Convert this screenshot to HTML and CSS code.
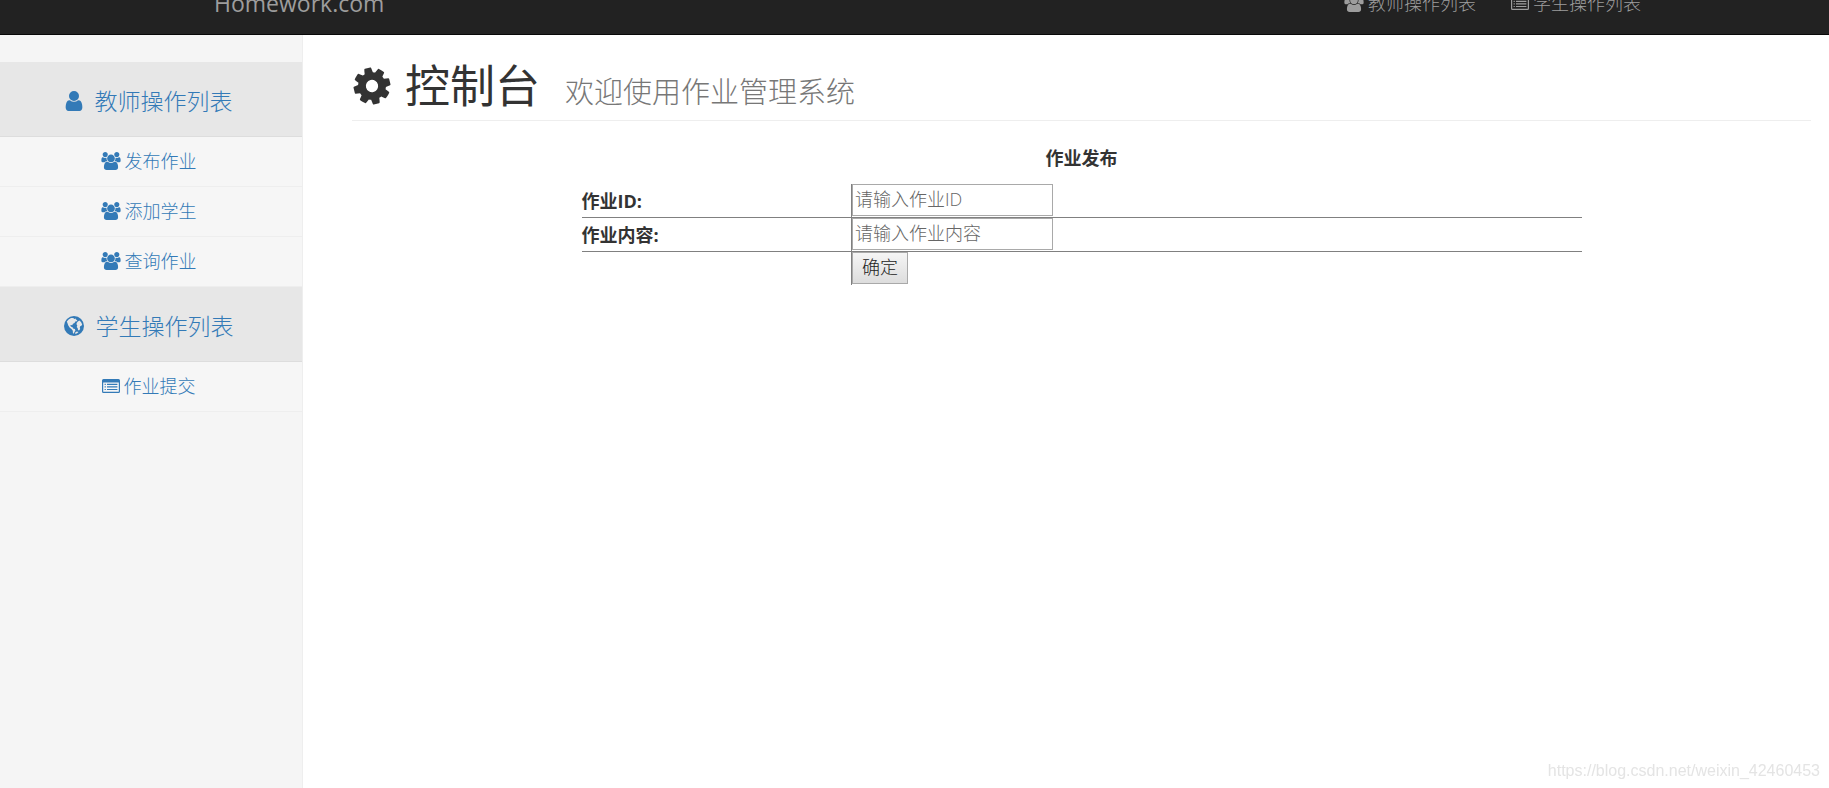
FILE: index.html
```html
<!DOCTYPE html>
<html lang="zh-CN">
<head>
<meta charset="utf-8">
<title>作业管理系统</title>
<link rel="stylesheet" href="styles.css">
</head>
<body>
<svg class="sprite" aria-hidden="true">
  <symbol id="users" viewBox="-64 0 1920 1792"><path d="M529 896q-162 5-265 128h-134q-82 0-138-40.500t-56-118.500q0-353 124-353 6 0 43.500 21t97.500 42.500 119 21.500q67 0 133-23-5 37-5 66 0 139 81 256zm1071 637q0 120-73 189.500t-194 69.500h-874q-121 0-194-69.500t-73-189.500q0-53 3.500-103.500t14-109 26.500-108.500 43-97.500 62-81 85.500-53.500 111.500-20q10 0 43 21.500t73 48 107 48 135 21.500 135-21.500 107-48 73-48 43-21.500q61 0 111.500 20t85.500 53.500 62 81 43 97.500 26.500 108.500 14 109 3.500 103.500zm-1024-1277q0 106-75 181t-181 75-181-75-75-181 75-181 181-75 181 75 75 181zm704 384q0 159-112.500 271.500t-271.500 112.500-271.500-112.500-112.500-271.500 112.500-271.500 271.500-112.500 271.500 112.500 112.500 271.500zm576 225q0 78-56 118.500t-138 40.500h-134q-103-123-265-128 81-117 81-256 0-29-5-66 66 23 133 23 59 0 119-21.500t97.500-42.500 43.500-21q124 0 124 353zm-128-609q0 106-75 181t-181 75-181-75-75-181 75-181 181-75 181 75 75 181z"/></symbol>
  <symbol id="user" viewBox="256 128 1280 1536"><path d="M1536 1399q0 109-62.500 187t-150.500 78h-854q-88 0-150.500-78t-62.500-187q0-85 8.500-160.500t31.500-152 58.500-131 94-89 134.500-34.500q131 128 313 128t313-128q76 0 134.500 34.500t94 89 58.500 131 31.500 152 8.500 160.500zm-256-887q0 159-112.500 271.500t-271.500 112.500-271.500-112.500-112.500-271.500 112.500-271.500 271.500-112.500 271.500 112.500 112.500 271.500z"/></symbol>
  <symbol id="list" viewBox="0 0 18 14"><path fill-rule="evenodd" d="M1.500 0h15Q18 0 18 1.500v11Q18 14 16.500 14h-15Q0 14 0 12.500v-11Q0 0 1.500 0zM1.200 3.400v9q0 .4.400.4h14.800q.4 0 .4-.4v-9zM2.600 4.700h1.200v1.200H2.600zM5 4.700h10.400v1.200H5zM2.600 7.300h1.200v1.200H2.600zM5 7.300h10.400v1.200H5zM2.600 9.900h1.200v1.200H2.600zM5 9.900h10.400v1.200H5z"/></symbol>
  <symbol id="globe" viewBox="0 0 20 20"><circle cx="10" cy="10" r="10"/><path class="land" d="M2.800 5.600 4.600 3.400 7 1.900l2.200.1 1.200 1 1.300-.6.300 1.200 1.300.6-.5 1.100-1.500.3-.8 1.300-1.500.8-.8 1.500-1.300-.3-.7.900 1 .9 1.400.6.500 1.200 1.800.6.500 1.400-1 1.600-.500 1.600-1-.8-.1-2.200-1.300-1.700-1.700-1.300-1.500-2.200-.8-2.300zM13.800 5.400l1.600-.8 1.600 1.500 1.200 2.300-.8 1.400-1.200.4-.4 1.300.4 1.400-1.200 1.500-1-.4-.3-1.700-1-1.400.6-1.500-.9-1.300.6-1.500zM11.200 16.400l1.600-.8 1.700.3-1.300 1.400-1.900.7z"/></symbol>
  <symbol id="cog" viewBox="60 60 1672 1672"><path transform="rotate(-14 896 896)" d="M1152 896q0-106-75-181t-181-75-181 75-75 181 75 181 181 75 181-75 75-181zm512-109v222q0 12-8 23t-20 13l-185 28q-19 54-39 91 35 50 107 138 10 12 10 25t-9 23q-27 37-99 108t-94 71q-12 0-26-9l-138-108q-44 23-91 38-16 136-29 186-7 28-36 28h-222q-14 0-24.500-8.500t-11.500-21.500l-28-184q-49-16-90-37l-141 107q-10 9-25 9-14 0-25-11-126-114-165-168-7-10-7-23 0-12 8-23 15-21 51-66.500t54-70.500q-27-50-41-99l-183-27q-13-2-21-12.500t-8-23.500v-222q0-12 8-23t19-13l186-28q14-46 39-92-40-57-107-138-10-12-10-24 0-10 9-23 26-36 98.500-107.500t94.500-71.500q13 0 26 10l138 107q44-23 91-38 16-136 29-186 7-28 36-28h222q14 0 24.500 8.500t11.500 21.500l28 184q49 16 90 37l142-107q9-9 24-9 13 0 25 10 129 119 165 170 7 8 7 22 0 12-8 23-15 21-51 66.500t-54 70.500q26 50 41 98l183 28q13 2 21 12.500t8 23.500z"/></symbol>
</svg>

<header class="navbar">
  <a class="brand" href="#">Homework.com</a>
  <nav class="top-nav">
    <a href="#"><svg class="icon-users"><use href="#users"/></svg>教师操作列表</a>
    <a href="#"><svg class="icon-list"><use href="#list"/></svg>学生操作列表</a>
  </nav>
</header>

<div class="layout">
  <nav class="sidebar">
    <a class="group" href="#"><svg class="icon-user"><use href="#user"/></svg>教师操作列表</a>
    <a class="item" href="#"><svg class="icon-users"><use href="#users"/></svg>发布作业</a>
    <a class="item" href="#"><svg class="icon-users"><use href="#users"/></svg>添加学生</a>
    <a class="item" href="#"><svg class="icon-users"><use href="#users"/></svg>查询作业</a>
    <a class="group" href="#"><svg class="icon-globe"><use href="#globe"/></svg>学生操作列表</a>
    <a class="item" href="#"><svg class="icon-list"><use href="#list"/></svg>作业提交</a>
  </nav>

  <main class="content">
    <h1 class="page-header">
      <svg class="icon-cog"><use href="#cog"/></svg>
      <span>控制台</span>
      <small>欢迎使用作业管理系统</small>
    </h1>
    <form>
      <table class="form-table">
        <caption>作业发布</caption>
        <tbody>
          <tr>
            <th scope="row"><label for="hw-id">作业ID:</label></th>
            <td><input id="hw-id" type="text" placeholder="请输入作业ID"></td>
          </tr>
          <tr>
            <th scope="row"><label for="hw-content">作业内容:</label></th>
            <td><input id="hw-content" type="text" placeholder="请输入作业内容"></td>
          </tr>
          <tr>
            <th></th>
            <td><button type="button">确定</button></td>
          </tr>
        </tbody>
      </table>
    </form>
  </main>
</div>
<footer class="watermark">https://blog.csdn.net/weixin_42460453</footer>
</body>
</html>
```

FILE: styles.css
```css
* {
  box-sizing: border-box;
}

body {
  margin: 0;
  min-height: 100vh;
  display: flex;
  flex-direction: column;
  overflow: hidden;
  background: #fff;
  color: #333;
  font: 18px/24px "Open Sans", "Noto Sans CJK SC", sans-serif;
}

a {
  color: #337ab7;
  text-decoration: none;
}

svg {
  flex: none;
  fill: currentColor;
}

.sprite {
  display: none;
}

.icon-users {
  width: 20px;
  height: 18px;
}

.icon-list {
  width: 18px;
  height: 14px;
}

.icon-user {
  width: 18px;
  height: 20px;
}

.icon-globe {
  width: 20px;
  height: 20px;
}

.land {
  fill: #e7e7e7;
}

.icon-cog {
  width: 40px;
  height: 40px;
}

/* The bar is scrolled partly out of view */
.navbar {
  display: flex;
  align-items: center;
  justify-content: space-between;
  height: 63px;
  margin-top: -28px;
  padding: 0 188px 0 214px;
  background: #222;
  border-bottom: 1px solid #080808;
}

.navbar a {
  color: #9d9d9d;
}

.brand {
  font-size: 23px;
}

.top-nav {
  display: flex;
  gap: 35px;
  font-weight: 300;
}

.top-nav a {
  display: flex;
  align-items: center;
  gap: 4px;
}

.layout {
  flex: 1;
  display: flex;
}

.sidebar {
  flex: none;
  width: 303px;
  padding-top: 27px;
  background: #f5f5f5;
  border-right: 1px solid #eee;
  font-weight: 300;
}

.sidebar a {
  display: flex;
  align-items: center;
  justify-content: center;
  padding-right: 5px;
  border-bottom: 1px solid #e7e7e7;
}

.sidebar .group {
  height: 75px;
  gap: 12px;
  padding-top: 4px;
  background: #e7e7e7;
  border-bottom-color: #ddd;
  font-size: 23px;
}

.sidebar .item {
  height: 50px;
  gap: 4px;
  padding-bottom: 2px;
  background: #f6f6f6;
  border-bottom-color: #eee;
}

.content {
  flex: 1;
  padding: 26px 18px 0 49px;
}

.page-header {
  display: flex;
  align-items: center;
  gap: 13px;
  margin: 0 0 24px;
  padding-bottom: 9px;
  border-bottom: 1px solid #eee;
  font-size: 45px;
  font-weight: 400;
  line-height: 50px;
}

.page-header small {
  margin: 12px 0 0 12px;
  color: #777;
  font-size: 29px;
  font-weight: 300;
  line-height: 38px;
}

.form-table {
  width: 100%;
  max-width: 1000px;
  margin: 0 auto;
  border-collapse: collapse;
}

.form-table caption {
  padding-bottom: 13px;
  font-weight: 700;
  line-height: 26px;
}

.form-table tr {
  border-bottom: 1px solid gray;
}

.form-table tr:last-child {
  border-bottom: 0;
}

.form-table th {
  width: 27%;
  padding: 0;
  text-align: left;
}

.form-table td {
  padding: 0;
  border-left: 1px solid gray;
}

.form-table input,
.form-table button {
  display: block;
  height: 32px;
  margin: 0 0 1px;
  border: 1px solid #a9a9a9;
  font: inherit;
  font-weight: 300;
}

.form-table input {
  width: 201px;
  padding: 0 2px 2px;
}

.form-table input::placeholder {
  color: #666;
}

.form-table button {
  padding: 0 9px 2px;
  background: linear-gradient(#f5f5f5, #ddd);
  color: #222;
}

.watermark {
  position: fixed;
  right: 9px;
  bottom: 7px;
  color: #e4e4e4;
  font: 16px/20px "Liberation Sans", sans-serif;
}
```
